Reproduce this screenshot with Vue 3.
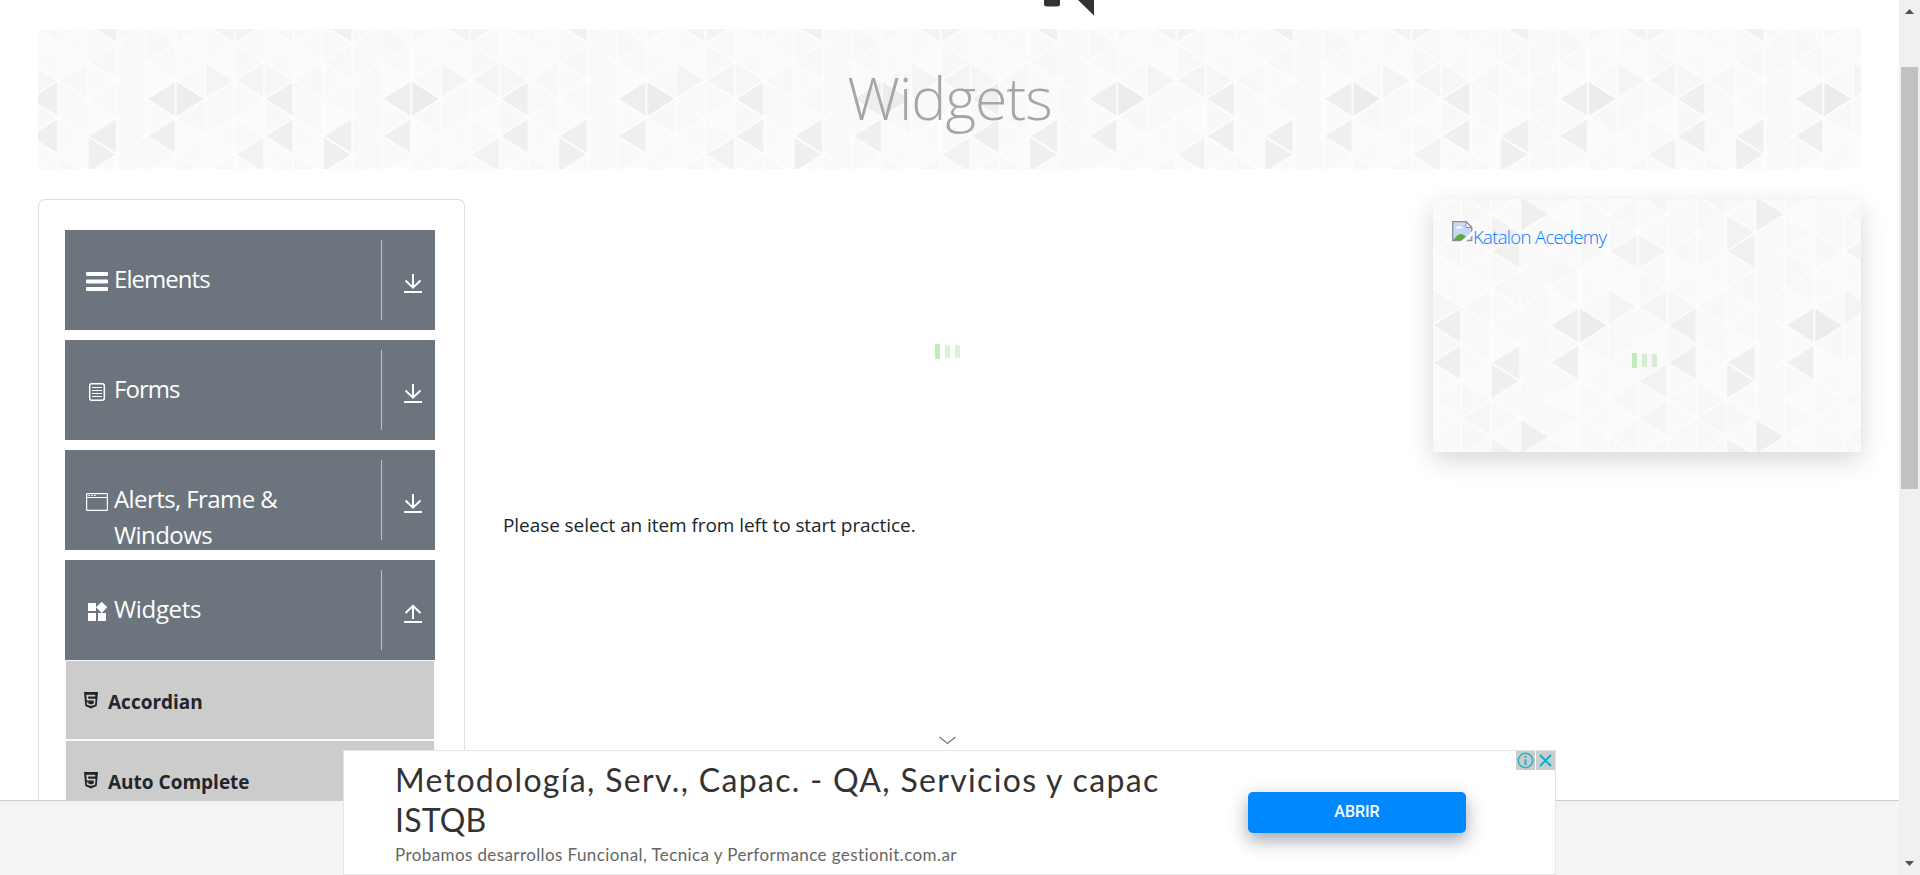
<script setup>
const COLUMN = 29.42
const HALF_ROW = 18.56
const TILE_W = COLUMN * 8
const TILE_H = HALF_ROW * 12

const accents = {
  '3-1': '#efefef', '2-2': '#f2f2f2', '2-3': '#f0f0f0', '6-3': '#f3f3f3', '7-3': '#f3f3f3',
  '0-7': '#efefef', '4-7': '#eeeeee', '5-7': '#ececec', '6-6': '#f4f4f4', '7-6': '#f4f4f4',
  '0-6': '#f6f6f6', '0-9': '#efefef', '2-9': '#efefef', '2-10': '#efefef', '4-9': '#efefef',
  '7-10': '#f2f2f2', '7-0': '#f5f5f5', '1-0': '#f6f6f6'
}
const tints = ['#fafafa', '#f8f8f8', '#f9f9f9', '#fbfbfb', '#f9f9f9']

const triangles = []
for (let c = -1; c <= 8; c++) {
  for (let r = -1; r <= 13; r++) {
    const wc = (c + 8) % 8
    const wr = (r + 12) % 12
    const pointsLeft = (wc + wr) % 2 === 1
    const left = c * COLUMN
    const right = left + COLUMN
    const y = r * HALF_ROW
    const points = pointsLeft
      ? `${left},${y} ${right},${y - HALF_ROW} ${right},${y + HALF_ROW}`
      : `${right},${y} ${left},${y - HALF_ROW} ${left},${y + HALF_ROW}`
    triangles.push({
      key: `${c}:${r}`,
      points,
      fill: accents[`${wc}-${wr}`] || tints[(wc * 3 + wr * 2 + wc * wr) % 5]
    })
  }
}

const groups = [
  { label: 'Elements', icon: 'menu' },
  { label: 'Forms', icon: 'form' },
  { label: 'Alerts, Frame & Windows', icon: 'window' },
  { label: 'Widgets', icon: 'widgets', open: true }
]
const items = ['Accordian', 'Auto Complete']
</script>

<template>
  <div class="screen">
    <div class="page">
      <svg class="logo" width="60" height="16" viewBox="0 0 60 16">
        <path d="M4 0h16v4q0 2.500-3 2.500H7q-3 0-3-2.500z" fill="#333" />
        <path d="M38 0h16v15.500z" fill="#333" />
      </svg>

      <header class="banner">
        <svg class="texture" width="1823" height="140">
          <defs>
            <pattern id="bannerTile" x="-9.200" y="-59.900" :width="TILE_W" :height="TILE_H" patternUnits="userSpaceOnUse">
              <polygon v-for="t in triangles" :key="t.key" :points="t.points" :fill="t.fill" stroke="#fdfdfd" stroke-width="1.800" />
            </pattern>
          </defs>
          <rect width="1823" height="140" fill="url(#bannerTile)" />
        </svg>
        <h1>Widgets</h1>
      </header>

      <main class="columns">
        <aside class="sidebar">
          <section v-for="g in groups" :key="g.label" class="group">
            <div class="group-head">
              <svg v-if="g.icon === 'menu'" class="icon" width="24" height="24" viewBox="0 0 24 24" fill="#fff">
                <rect x="1" y="3" width="22" height="4" rx="1" /><rect x="1" y="10.500" width="22" height="4" rx="1" /><rect x="1" y="18" width="22" height="4" rx="1" />
              </svg>
              <svg v-else-if="g.icon === 'form'" class="icon" width="24" height="24" viewBox="0 0 24 24" fill="none" stroke="#fff">
                <rect x="4.700" y="4.700" width="14.600" height="16.600" rx="2" stroke-width="1.500" />
                <path d="M7 8.500h10M7 11.500h10M7 14.500h10M7 17.500h10" stroke-width="1" />
              </svg>
              <svg v-else-if="g.icon === 'window'" class="icon" width="24" height="24" viewBox="0 0 24 24" fill="none" stroke="#fff">
                <rect x="1.600" y="4.600" width="20.800" height="16.800" rx=".6" stroke-width="1.200" />
                <path d="M2 8.500h20" stroke-width="1" /><path d="M3.500 6.500h8.500" stroke-width="1.200" stroke-dasharray="1.600 1.300" />
              </svg>
              <svg v-else class="icon" width="24" height="24" viewBox="0 0 24 24" fill="#fff">
                <path d="M3 4h8v8H3zM3 14h8v8H3zM13 14h8v8h-8zM16.700 2.700l5.600 5.600-5.600 5.700L11 8.300z" />
              </svg>
              <span class="group-label" :class="g.icon">{{ g.label }}</span>
              <span class="toggle">
                <svg width="18" height="20" viewBox="0 0 18 20" fill="none" stroke="#fff" stroke-width="2">
                  <path v-if="g.open" d="M9 15V1.800M1.500 9L9 1.800 16.500 9M0 18h18" />
                  <path v-else d="M9 0v13.500M1.500 6.500L9 13.700l7.500-7.200M0 18h18" />
                </svg>
              </span>
            </div>
            <ul v-if="g.open" class="items">
              <li v-for="item in items" :key="item">
                <svg width="14" height="17" viewBox="0 0 14 17">
                  <path d="M0 0h14l-1.300 14L7 16.500 1.300 14z" fill="#212529" />
                  <path d="M11.200 3.600H3.200l.3 4h7.200l-.4 4.600L7 13.200l-3.300-1-.15-2" fill="none" stroke="#ccc" stroke-width="1.600" />
                </svg>
                <span>{{ item }}</span>
              </li>
            </ul>
          </section>
        </aside>

        <section class="content">
          <div class="loader"><i></i><i></i><i></i></div>
          <p>Please select an item from left to start practice.</p>
        </section>

        <aside class="promo">
          <svg class="texture" width="428" height="253">
            <defs>
              <pattern id="promoTile" x="-1" y="-3.400" :width="TILE_W" :height="TILE_H" patternUnits="userSpaceOnUse">
                <polygon v-for="t in triangles" :key="t.key" :points="t.points" :fill="t.fill" stroke="#fdfdfd" stroke-width="1.800" />
              </pattern>
            </defs>
            <rect width="428" height="253" fill="url(#promoTile)" />
          </svg>
          <a class="promo-link">
            <svg width="21" height="21" viewBox="0 0 21 21">
              <path d="M.7.700h13.500l5.600 5.500v13.500H.7z" fill="#c8d8f6" stroke="#8f8f8f" stroke-width="1.300" />
              <path d="M14 1v5.500h5.500z" fill="#fff" stroke="#8f8f8f" />
              <path d="M4 7.500q0-2 2-1.700 1.500-1.800 2.800.2 2 0 1.700 1.500z" fill="#fff" />
              <path d="M1.500 19Q9 7 16.500 19z" fill="#56ae38" />
              <path d="M8 21L21 9.500V14l-7.500 7z" fill="#fafafa" />
            </svg>
            <span>Katalon Acedemy</span>
          </a>
          <div class="loader promo-loader"><i></i><i></i><i></i></div>
        </aside>
      </main>
      <footer class="footer"></footer>
    </div>

    <div class="scrollbar">
      <svg width="21" height="875" viewBox="0 0 21 875">
        <path d="M6 14l4.500-5 4.500 5z" fill="#505050" />
        <rect x="2" y="67" width="17" height="422" fill="#c1c1c1" />
        <path d="M6 861l4.500 5 4.500-5z" fill="#505050" />
      </svg>
    </div>

    <svg class="chevron" width="17" height="9" viewBox="0 0 17 9" fill="none" stroke="#777" stroke-width="1.300"><path d="M.5 1l8 6.500 8-6.500" /></svg>
    <div class="ad">
      <div class="ad-copy">
        <div class="ad-title">Metodología, Serv., Capac. - QA, Servicios y capac</div>
        <div class="ad-title second">ISTQB</div>
        <div class="ad-text">Probamos desarrollos Funcional, Tecnica y Performance gestionit.com.ar</div>
      </div>
      <button class="ad-button">ABRIR</button>
      <div class="ad-controls">
        <svg width="19" height="19" viewBox="0 0 19 19" fill="none" stroke="#22b3cd">
          <circle cx="9.500" cy="9.500" r="7.200" stroke-width="1.500" /><path d="M9.500 8.200v5.800M9.500 4.700v2" stroke-width="2" />
        </svg>
        <svg width="19" height="19" viewBox="0 0 19 19" fill="none" stroke="#00aecd" stroke-width="1.800"><path d="M4 4l11 11M15 4L4 15" /></svg>
      </div>
    </div>
  </div>
</template>

<style>
body { overflow: hidden; }
</style>

<style scoped>
* { box-sizing: border-box; }
.screen { position: relative; display: flex; width: 1920px; height: 875px; overflow: hidden; background: #fff; color: #212529; font-family: "Open Sans", "Noto Sans", sans-serif; }
.page { display: flex; flex-direction: column; width: 1899px; height: 875px; }
.logo { flex: none; display: block; margin: 0 0 13px 1040px; }
.banner { position: relative; flex: none; width: 1823px; height: 140px; margin-left: 38px; }
.texture { position: absolute; inset: 0; display: block; }
h1 { position: relative; margin: 0; padding-top: 26px; text-align: center; font-weight: 300; font-size: 59px; line-height: 84px; letter-spacing: -1px; color: #a6a6a6; }
.columns { display: flex; flex: none; height: 631px; padding: 30px 38px 0; }
.sidebar { width: 427px; height: 601px; overflow: hidden; padding: 30px 26px 0; border: 1px solid #dedede; border-bottom: 0; border-radius: 7px 7px 0 0; }
.group { width: 370px; margin-bottom: 10px; }
.group-head { display: flex; height: 100px; overflow: hidden; background: #6c757d; color: #fff; }
.icon { flex: none; margin: 39px 5px 0 20px; }
.group-label { width: 190px; padding-top: 31px; font-size: 24px; line-height: 36px; }
.group-label.menu, .group-label.form { letter-spacing: -.95px; }
.group-label.window { letter-spacing: -.58px; }
.group-label.widgets { letter-spacing: -.33px; }
.toggle { margin: 10px 0 10px auto; width: 54px; height: 80px; border-left: 1px solid #c0c3c5; padding: 34px 0 0 22px; }
.toggle svg { display: block; }
.items { margin: 0; padding: 0 1px; list-style: none; background: #f8f8f8; }
.items li { display: flex; height: 80px; padding: 31px 0 0 18px; border-top: 1px solid #f8f8f8; border-bottom: 1px solid #f8f8f8; background: #ccc; font-size: 19px; font-weight: 700; line-height: 26px; gap: 10px; }
.items span { margin-top: -3px; }
.content { width: 968px; padding: 145px 38px 0; }
.loader { display: flex; align-items: center; gap: 5px; height: 15px; margin-left: 432px; }
.loader i { width: 5px; height: 13px; background: #d9f3d6; }
.loader i:first-child { height: 15px; background: #bfedb9; }
.content p { margin: 151px 0 0; font-size: 19px; line-height: 30px; letter-spacing: -.07px; white-space: nowrap; }
.promo { position: relative; width: 428px; height: 253px; box-shadow: 0 8px 24px rgba(0, 0, 0, .16); }
.promo-link { position: relative; display: flex; margin: 22px 0 0 19px; color: #007bff; font-size: 18.5px; font-weight: 300; line-height: 26px; letter-spacing: -.67px; }
.promo-link span { margin-top: 3px; }
.promo-link svg { flex: none; }
.promo-loader { position: relative; margin: 103px 0 0 199px; }
.promo-loader i { background: #d5edd1; }
.promo-loader i:first-child { background: #c2e9bd; }
.footer { flex: 1; border-top: 1px solid #ccc; background: #f4f4f4; }
.scrollbar { width: 21px; height: 875px; background: #f0f0f0; }
.scrollbar svg { display: block; }
.chevron { position: absolute; left: 939px; top: 736px; }
.ad { position: absolute; left: 343px; top: 750px; display: flex; width: 1213px; height: 125px; border: 1px solid #e5e5e5; background: #fff; }
.ad-copy { width: 904px; padding: 9px 0 0 51px; white-space: nowrap; font-family: Lato, sans-serif; }
.ad-title { font-size: 32px; line-height: 40px; color: #333; letter-spacing: 1.33px; }
.ad-title.second { letter-spacing: .2px; }
.ad-text { margin-top: 4px; font-size: 17px; line-height: 22px; color: #666; letter-spacing: .4px; }
.ad-button { width: 218px; height: 41px; margin-top: 41px; padding: 0 0 3px; border: 0; border-radius: 5px; background: #08f; box-shadow: 0 7px 18px rgba(30, 35, 60, .42); color: #fff; font: 500 16px Roboto, sans-serif; }
.ad-controls { display: flex; gap: 1px; margin-left: auto; }
.ad-controls svg { display: block; background: #ccc; }
</style>
